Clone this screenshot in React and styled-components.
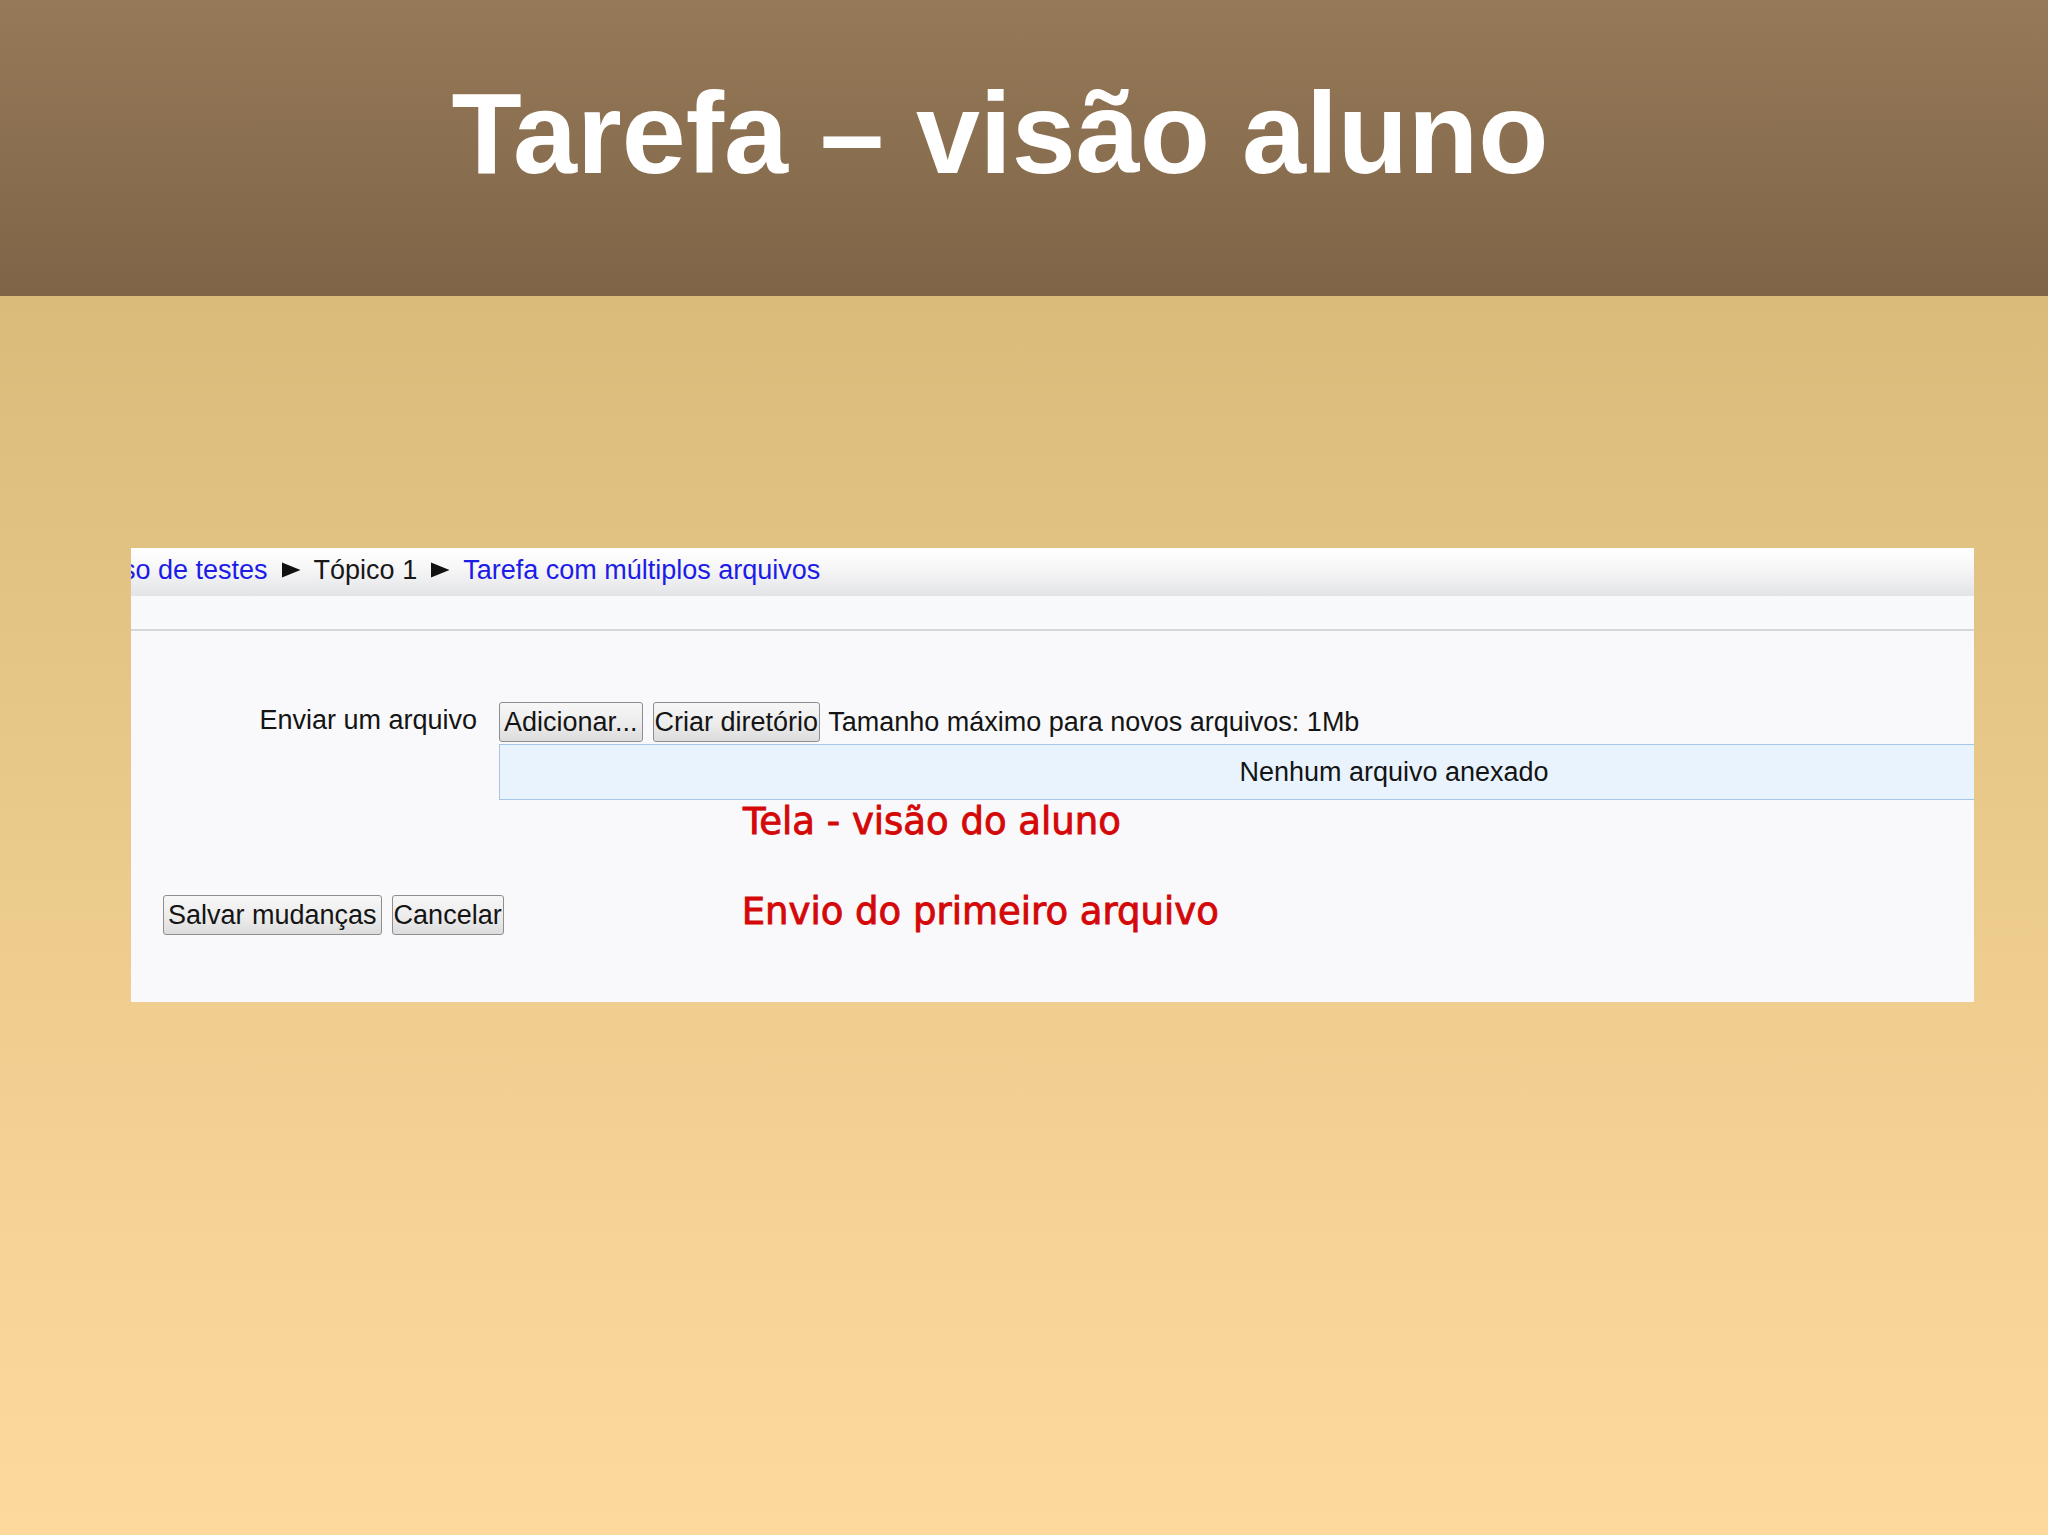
import React from "react";
import styled, { createGlobalStyle } from "styled-components";

const GlobalStyle = createGlobalStyle`
  html, body {
    margin: 0;
    padding: 0;
  }
  body {
    font-family: "Liberation Sans", Arial, sans-serif;
  }
  * { box-sizing: border-box; }
`;

const Slide = styled.div`
  width: 2048px;
  height: 1535px;
  display: flex;
  flex-direction: column;
  overflow: hidden;
  background: #fed99e;
`;

const Header = styled.header`
  height: 296px;
  flex: 0 0 auto;
  padding: 67px 48px 0 0;
  background: linear-gradient(180deg, #967958 0%, #8a6f50 50%, #7f6447 100%);
`;

const Title = styled.h1`
  margin: 0;
  text-align: center;
  font-family: "Liberation Sans", Arial, sans-serif;
  font-weight: 700;
  font-size: 115px;
  line-height: 132px;
  color: #ffffff;
`;

const Body = styled.main`
  flex: 1 1 auto;
  padding: 252px 0 0 131px;
  background: linear-gradient(180deg, #dbbb7a 0%, #e9c98a 40%, #fed99e 100%);
`;

const Shot = styled.section`
  width: 1843px;
  height: 454px;
  overflow: hidden;
  background: #f9f9fb;
  display: flex;
  flex-direction: column;
  font-family: "Liberation Sans", Arial, sans-serif;
  font-size: 27px;
  color: #141414;
`;

const NavBar = styled.nav`
  height: 48px;
  display: flex;
  align-items: center;
  gap: 13px;
  padding-bottom: 4px;
  background: linear-gradient(180deg, #ffffff 0%, #f7f7f8 40%, #e3e4e7 100%);
  white-space: nowrap;
`;

const Crumb = styled.span`
  color: ${(p) => (p.$link ? "#1c1ce6" : "#181818")};
  line-height: 30px;
  margin-left: ${(p) => (p.$cut ? "-9px" : "0")};
`;

const Sep = () => (
  <svg width="20" height="16" viewBox="0 0 20 16" aria-hidden="true">
    <path d="M1 0.5 L19.5 8 L1 15.5 Z" fill="#111" />
  </svg>
);

const SubBar = styled.div`
  height: 35px;
  background: #f8f9fa;
  border-bottom: 2px solid #d6d7db;
`;

const Form = styled.div`
  display: grid;
  grid-template-columns: 368px 1fr;
  padding-top: 71px;
`;

const Label = styled.div`
  text-align: right;
  padding-right: 22px;
  margin-top: 3px;
  line-height: 30px;
  white-space: nowrap;
`;

const Controls = styled.div`
  display: flex;
  flex-direction: column;
  min-width: 0;
`;

const ButtonRow = styled.div`
  display: flex;
  align-items: center;
  gap: 10px;
  white-space: nowrap;
`;

const Button = styled.button`
  font-family: "Liberation Sans", Arial, sans-serif;
  font-size: 27px;
  line-height: 30px;
  color: #141414;
  padding: 4px ${(p) => (p.$tight ? "1px" : "4px")};
  margin: 0;
  border: 1px solid #8e8e8e;
  border-radius: 3px;
  background: linear-gradient(180deg, #f7f7f7 0%, #ececec 55%, #dcdcdc 100%);
  white-space: nowrap;
  flex: 0 0 auto;
`;

const Hint = styled.span`
  line-height: 30px;
  margin-left: -2px;
`;

const FileList = styled.div`
  width: 1790px;
  height: 56px;
  margin-top: 2px;
  display: flex;
  align-items: center;
  justify-content: center;
  background: #e8f3fd;
  border: 1px solid #a6c6e8;
  line-height: 30px;
`;

const Note = styled.div`
  font-family: "DejaVu Sans", "Liberation Sans", sans-serif;
  font-size: 37px;
  line-height: 43px;
  color: #d40808;
  -webkit-text-stroke: 0.9px #d40808;
  white-space: nowrap;
  margin-left: ${(p) => p.$indent || "0"};
`;

const Footer = styled.div`
  display: flex;
  align-items: flex-start;
  padding: 47px 0 0 32px;
`;

const FooterButtons = styled.div`
  display: flex;
  gap: 10px;
  margin-top: 5px;
`;

export default function App() {
  return (
    <>
      <GlobalStyle />
      <Slide>
        <Header>
          <Title>Tarefa – visão aluno</Title>
        </Header>
        <Body>
          <Shot>
            <NavBar>
              <Crumb $link $cut>so de testes</Crumb>
              <Sep />
              <Crumb>Tópico 1</Crumb>
              <Sep />
              <Crumb $link>Tarefa com múltiplos arquivos</Crumb>
            </NavBar>
            <SubBar />
            <Form>
              <Label>Enviar um arquivo</Label>
              <Controls>
                <ButtonRow>
                  <Button>Adicionar...</Button>
                  <Button $tight>Criar diretório</Button>
                  <Hint>Tamanho máximo para novos arquivos: 1Mb</Hint>
                </ButtonRow>
                <FileList>Nenhum arquivo anexado</FileList>
                <Note $indent="244px">Tela - visão do aluno</Note>
              </Controls>
            </Form>
            <Footer>
              <FooterButtons>
                <Button>Salvar mudanças</Button>
                <Button $tight>Cancelar</Button>
              </FooterButtons>
              <Note $indent="238px">Envio do primeiro arquivo</Note>
            </Footer>
          </Shot>
        </Body>
      </Slide>
    </>
  );
}
